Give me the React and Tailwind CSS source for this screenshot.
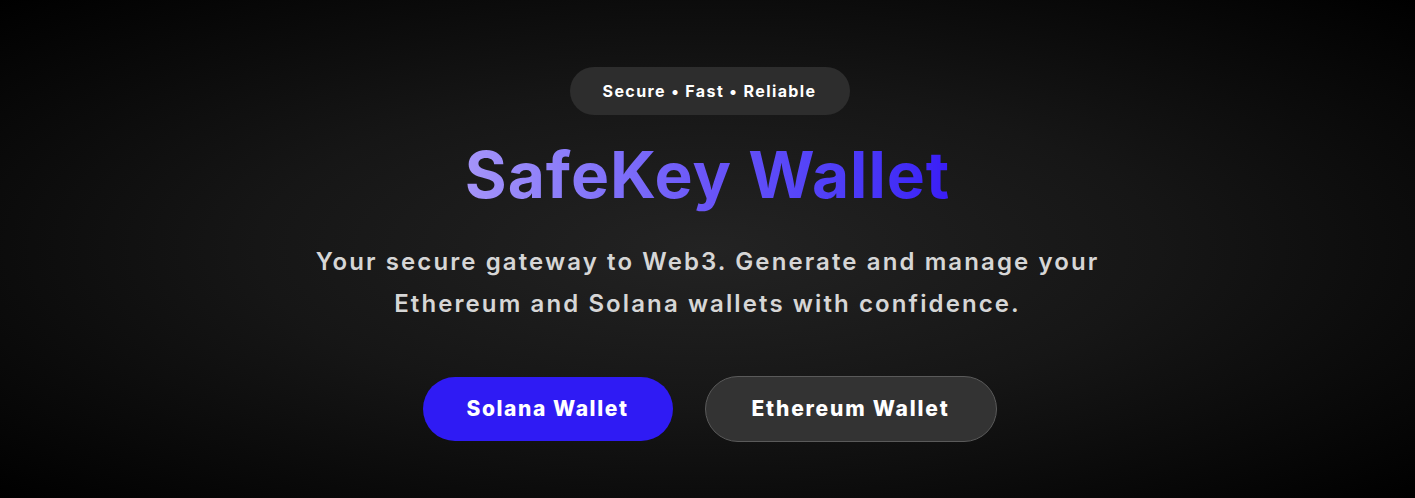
import React from 'react';

const App = () => {
    return (
        <div
            className="min-h-screen w-full flex flex-col items-center bg-[radial-gradient(ellipse_at_center,#232323_0%,#161616_45%,#000000_100%)] text-white"
            style={{ fontFamily: 'Inter, "Liberation Sans", sans-serif' }}
        >
            <div className="flex flex-col items-center pt-[67px]">
                <span className="ml-1 h-[48px] w-[280px] flex items-center justify-center rounded-full bg-[#2d2d2d] text-[16px] font-bold tracking-[1.4px] text-white">
                    Secure • Fast • Reliable
                </span>

                <h1 className="mt-[20px] text-[64px] leading-[80px] font-bold tracking-[1px] bg-gradient-to-r from-[#a594f9] via-[#6a55f8] to-[#3a1cf6] bg-clip-text text-transparent">
                    SafeKey Wallet
                </h1>

                <p className="mt-[26px] max-w-[820px] text-center text-[24px] leading-[42px] font-semibold tracking-[2.1px] text-[#d6d6d6]">
                    Your secure gateway to Web3. Generate and manage your
                    <br />
                    Ethereum and Solana wallets with confidence.
                </p>

                <div className="ml-1 mt-[52px] flex gap-8">
                    <button className="h-[64px] w-[250px] rounded-full bg-[#2f1bf4] text-[21px] font-extrabold tracking-[1.6px] text-white">
                        Solana Wallet
                    </button>
                    <button className="h-[66px] w-[292px] rounded-full bg-[#333333] border border-[#5a5a5a] text-[21px] font-extrabold tracking-[1.8px] text-white -mt-px">
                        Ethereum Wallet
                    </button>
                </div>
            </div>
        </div>
    );
};

export default App;
